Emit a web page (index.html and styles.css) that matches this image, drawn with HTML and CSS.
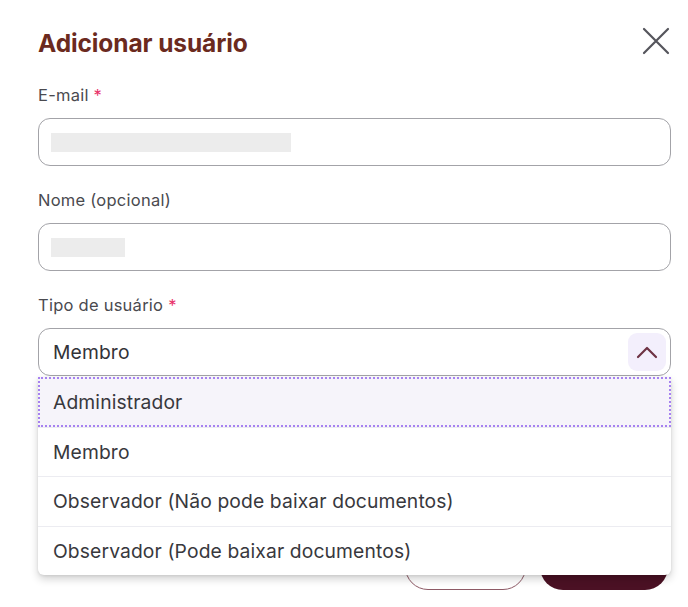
FILE: index.html
```html
<!DOCTYPE html>
<html lang="pt">
<head>
<meta charset="utf-8">
<link rel="stylesheet" href="styles.css">
</head>
<body>
<div class="dialog">
  <div class="header">
    <h1 class="title">Adicionar usuário</h1>
    <button class="close" aria-label="Fechar">
      <svg width="28" height="28" viewBox="0 0 28 28"><path d="M2 2 L26 26 M26 2 L2 26" stroke="#55555c" stroke-width="2.2" fill="none" stroke-linecap="round"/></svg>
    </button>
  </div>
  <div class="field">
    <label class="label">E-mail <span class="req">*</span></label>
    <div class="input"><span class="blur blur-email"></span></div>
  </div>
  <div class="field">
    <label class="label">Nome (opcional)</label>
    <div class="input"><span class="blur blur-name"></span></div>
  </div>
  <div class="field">
    <label class="label">Tipo de usuário <span class="req">*</span></label>
    <div class="select-wrap">
      <div class="input select">
        <span class="value">Membro</span>
        <span class="chev">
          <svg width="22" height="14" viewBox="0 0 22 14"><path d="M2 12 L11 3 L20 12" stroke="#6e3344" stroke-width="2.2" fill="none" stroke-linecap="round" stroke-linejoin="round"/></svg>
        </span>
      </div>
      <ul class="menu">
        <li class="opt active">Administrador</li>
        <li class="opt">Membro</li>
        <li class="opt">Observador (Não pode baixar documentos)</li>
        <li class="opt">Observador (Pode baixar documentos)</li>
      </ul>
    </div>
  </div>
  <div class="actions">
    <button class="btn btn-outline">Cancelar</button>
    <button class="btn btn-fill">Adicionar</button>
  </div>
</div>
</body>
</html>
```

FILE: styles.css
```css
* { box-sizing: border-box; }
html, body { margin: 0; padding: 0; background: #fff; }
body {
  font-family: Inter, "Noto Sans", sans-serif;
  width: 688px;
  height: 607px;
  overflow: hidden;
}
.dialog {
  padding: 24px 17px 0 38px;
  width: 688px;
}
.header {
  height: 38px;
  display: flex;
  align-items: center;
  justify-content: space-between;
  margin-bottom: 23px;
}
.title {
  margin: 0;
  font-size: 24.5px;
  font-weight: 700;
  color: #6b2a1e;
  letter-spacing: -0.1px;
}
.close {
  border: 0;
  background: none;
  padding: 0;
  width: 28px;
  height: 28px;
  margin-right: 1px;
  margin-top: -4px;
  cursor: pointer;
}
.field { margin-bottom: 24px; }
.field:last-of-type { margin-bottom: 0; }
.label {
  display: block;
  height: 20px;
  line-height: 20px;
  font-size: 16.5px;
  letter-spacing: 0.25px;
  color: #4a4a4f;
  margin-bottom: 13px;
}
.req { color: #e8336a; }
.input {
  height: 48px;
  border: 1.5px solid #a3a3a8;
  border-radius: 12px;
  display: flex;
  align-items: center;
  padding-left: 12px;
}
.blur {
  display: block;
  background: #ececec;
  height: 19px;
}
.blur-email { width: 240px; }
.blur-name { width: 74px; }
.select-wrap { position: relative; }
.select {
  justify-content: space-between;
  padding-left: 14px;
  padding-right: 4px;
}
.value { font-size: 19.3px; letter-spacing: 0.12px; color: #333338; }
.chev {
  width: 38px;
  height: 38px;
  border-radius: 9px;
  background: #f3effc;
  display: flex;
  align-items: center;
  justify-content: center;
}
.menu {
  position: absolute;
  z-index: 2;
  top: 49px;
  left: 0;
  right: 0;
  margin: 0;
  padding: 0;
  list-style: none;
  background: #fff;
  border-radius: 0 0 6px 6px;
  box-shadow: 0 4px 8px rgba(0,0,0,0.18), 0 1px 3px rgba(0,0,0,0.08);
}
.opt {
  height: 49.5px;
  display: flex;
  align-items: center;
  padding-left: 15px;
  font-size: 19.3px;
  letter-spacing: 0.12px;
  color: #38383d;
  border-top: 1px solid #ececf1;
}
.opt:first-child { border-top: 0; }
.opt.active {
  background: #f6f4fa;
  outline: 2px dotted #a681f0;
  outline-offset: -2px;
}
.actions {
  display: flex;
  justify-content: flex-end;
  gap: 14px;
  margin-top: 168px;
  padding-right: 3px;
}
.btn {
  height: 46px;
  border-radius: 24px;
  font-family: inherit;
  font-size: 16px;
}
.btn-outline {
  width: 121px;
  background: #fff;
  border: 1.5px solid #8e5a66;
  color: #5a1a2a;
}
.btn-fill {
  width: 128px;
  background: #4b1124;
  border: 0;
  color: #fff;
}
```
